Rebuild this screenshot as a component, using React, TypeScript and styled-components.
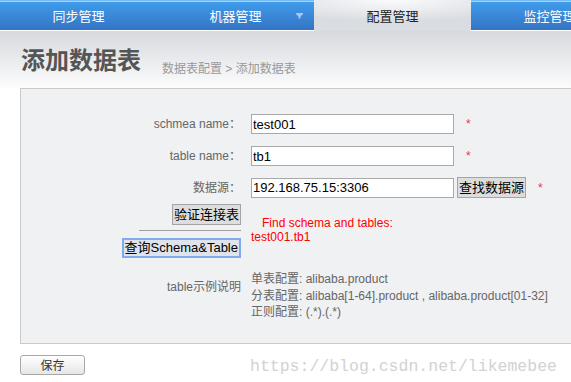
import styled, { createGlobalStyle } from "styled-components";

const GlobalStyle = createGlobalStyle`
  html, body {
    margin: 0;
    padding: 0;
    background: #fff;
    overflow: hidden;
  }
  body {
    font-family: "Liberation Sans", "Noto Sans CJK SC", sans-serif;
  }
`;

const Page = styled.div`
  position: relative;
  width: 571px;
  height: 382px;
  overflow: hidden;
`;

const Nav = styled.nav`
  display: flex;
  height: 31px;
  background: linear-gradient(
    to bottom,
    #4a9fe8 0,
    #a6d3f8 1px,
    #a6d3f8 2px,
    #3f9cea 2px,
    #3473c4 30px,
    #ffffff 30px
  );
`;

const Tab = styled.div<{ $active?: boolean }>`
  position: relative;
  flex: 0 0 157px;
  height: 31px;
  display: flex;
  align-items: center;
  justify-content: center;
  padding-bottom: 1px;
  box-sizing: border-box;
  font-size: 13px;
  color: ${(p) => (p.$active ? "#222" : "#fff")};
  background: ${(p) =>
    p.$active
      ? "radial-gradient(ellipse 90% 70% at 50% 0, #fbfbfc 0, #e8eaed 55%, #d9dce1 100%)"
      : "transparent"};
`;

const Caret = styled.svg`
  position: absolute;
  right: 11px;
  top: 13px;
`;

const Header = styled.header`
  display: flex;
  align-items: flex-end;
  gap: 21px;
  height: 57px;
  padding: 0 20px 15px 21px;
  box-sizing: border-box;
  background: linear-gradient(to bottom, #d6d9de, #fcfcfc);
`;

const Title = styled.h1`
  margin: 0;
  font-size: 24px;
  line-height: 24px;
  font-weight: bold;
  color: #555;
`;

const Crumbs = styled.div`
  margin-bottom: -2px;
  font-size: 12px;
  line-height: 12px;
  color: #999;
`;

const Panel = styled.section`
  margin-left: 20px;
  width: 600px;
  height: 256px;
  box-sizing: border-box;
  padding-top: 25px;
  border: 1px solid #c9c9c9;
  border-right: none;
  background: #f0f1f3;
`;

const Row = styled.div<{ $top?: number; $align?: string }>`
  display: grid;
  grid-template-columns: 220px auto;
  column-gap: 10px;
  align-items: ${(p) => p.$align ?? "center"};
  margin-top: ${(p) => p.$top ?? 0}px;
`;

const Label = styled.div<{ $pad?: number }>`
  text-align: right;
  font-size: 12px;
  line-height: 16px;
  color: #666;
  padding-top: ${(p) => p.$pad ?? 0}px;
`;

const Field = styled.div`
  display: flex;
  align-items: center;
  gap: 3px;
`;

const Input = styled.input`
  width: 203px;
  height: 20px;
  box-sizing: border-box;
  margin: 0 9px 0 0;
  padding: 0 1px;
  border: 1px solid #a9a9a9;
  background: #fff;
  font-family: "Liberation Sans", sans-serif;
  font-size: 13px;
  color: #000;
  outline: none;
`;

const Button = styled.button<{ $focus?: boolean }>`
  height: ${(p) => (p.$focus ? 20 : 21)}px;
  box-sizing: border-box;
  margin: 0;
  padding: 0 1px;
  border: ${(p) => (p.$focus ? "2px solid #80aaea" : "1px solid #a4a4a4")};
  border-radius: 0;
  background: ${(p) => (p.$focus ? "#dfe4ec" : "#dddddd")};
  font-family: "Liberation Sans", "Noto Sans CJK SC", sans-serif;
  font-size: 13px;
  line-height: 16px;
  color: #000;
  white-space: nowrap;
`;

const Star = styled.span<{ $gap?: number }>`
  margin-left: ${(p) => p.$gap ?? 0}px;
  font-size: 12px;
  color: #ee3355;
`;

const ButtonStack = styled.div`
  display: flex;
  flex-direction: column;
  align-items: flex-end;
`;

const Divider = styled.div`
  width: 102px;
  height: 1px;
  margin: 5px 0 7px;
  background: #a0a0a0;
`;

const Message = styled.div`
  padding-top: 12px;
  font-size: 12px;
  line-height: 14px;
  color: #f00;
`;

const Indent = styled.span`
  padding-left: 11px;
`;

const Examples = styled.div`
  font-size: 12px;
  line-height: 16.5px;
  color: #666;
`;

const SaveButton = styled.button`
  display: block;
  width: 65px;
  height: 20px;
  margin: 11px 0 0 20px;
  padding: 0;
  border: 1px solid #a8a8a8;
  border-radius: 3px;
  background: linear-gradient(to bottom, #ffffff, #e6e6e6);
  font-family: "Noto Sans CJK SC", sans-serif;
  font-size: 12px;
  line-height: 16px;
  color: #333;
`;

const Watermark = styled.div`
  position: absolute;
  left: 250px;
  top: 357px;
  font-family: "Liberation Mono", monospace;
  font-size: 16.5px;
  line-height: 20px;
  color: #d2d2d2;
  pointer-events: none;
`;

export default function App() {
  return (
    <Page>
      <GlobalStyle />
      <Nav>
        <Tab>同步管理</Tab>
        <Tab>
          机器管理
          <Caret width="7" height="6" viewBox="0 0 7 6">
            <path d="M0 0H7V1L4.5 3.5V5.5H2.5V3.5L0 1Z" fill="#9fcaf1" />
          </Caret>
        </Tab>
        <Tab $active>配置管理</Tab>
        <Tab>监控管理</Tab>
      </Nav>

      <Header>
        <Title>添加数据表</Title>
        <Crumbs>数据表配置 &gt; 添加数据表</Crumbs>
      </Header>

      <Panel>
        <Row>
          <Label>schmea name：</Label>
          <Field>
            <Input defaultValue="test001" />
            <Star>*</Star>
          </Field>
        </Row>
        <Row $top={12}>
          <Label>table name：</Label>
          <Field>
            <Input defaultValue="tb1" />
            <Star>*</Star>
          </Field>
        </Row>
        <Row $top={11}>
          <Label>数据源：</Label>
          <Field>
            <Input defaultValue="192.168.75.15:3306" style={{ marginRight: 0 }} />
            <Button>查找数据源</Button>
            <Star $gap={9}>*</Star>
          </Field>
        </Row>
        <Row $top={6} $align="start">
          <ButtonStack>
            <Button>验证连接表</Button>
            <Divider />
            <Button $focus>查询Schema&amp;Table</Button>
          </ButtonStack>
          <Message>
            <Indent>Find schema and tables:</Indent>
            <br />
            test001.tb1
          </Message>
        </Row>
        <Row $top={13} $align="start">
          <Label $pad={8}>table示例说明</Label>
          <Examples>
            单表配置: alibaba.product
            <br />
            分表配置: alibaba[1-64].product , alibaba.product[01-32]
            <br />
            正则配置: (.*).(.*)
          </Examples>
        </Row>
      </Panel>

      <SaveButton>保存</SaveButton>
      <Watermark>https://blog.csdn.net/likemebee</Watermark>
    </Page>
  );
}
